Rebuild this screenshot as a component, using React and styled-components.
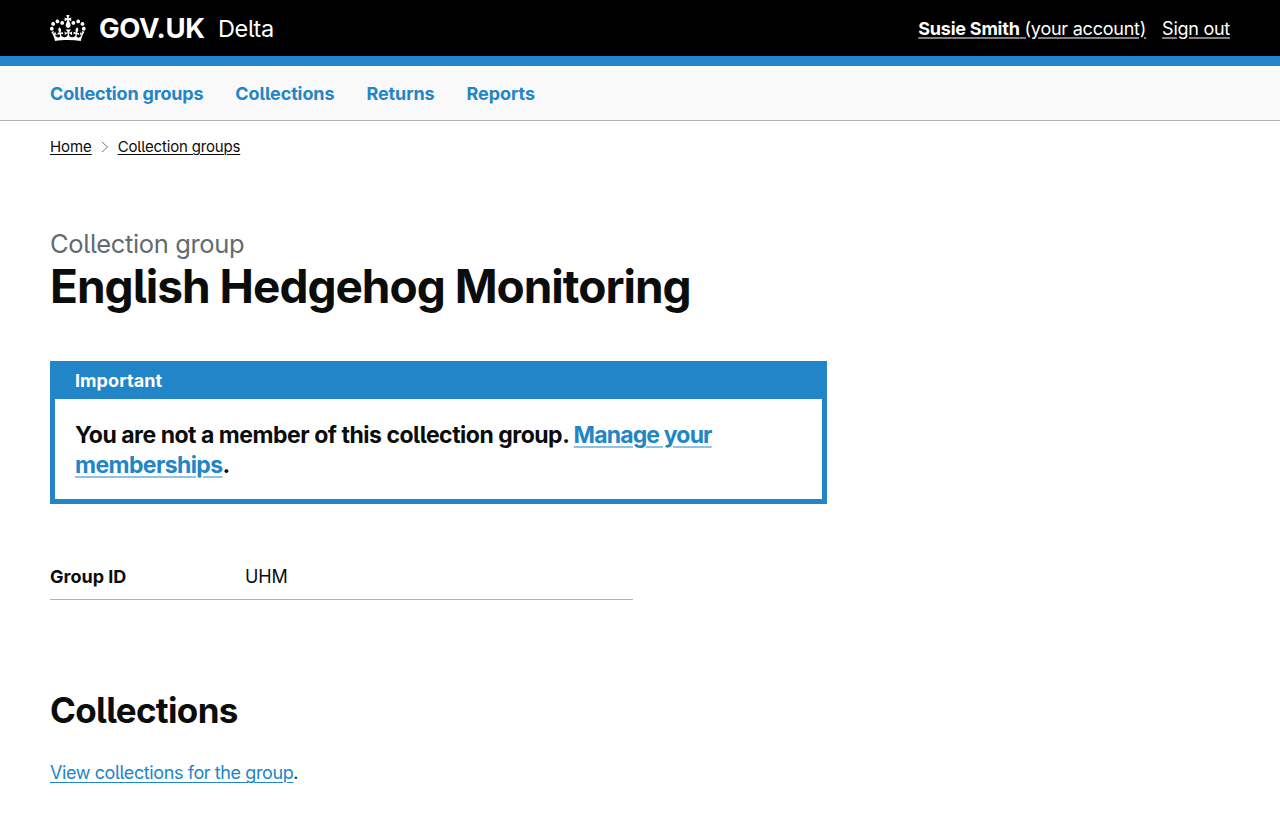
import React from "react";
import styled, { createGlobalStyle } from "styled-components";

const GlobalStyle = createGlobalStyle`
  * { box-sizing: border-box; }
  body {
    margin: 0;
    background: #fff;
    color: #0b0c0c;
    font-family: Inter, "Liberation Sans", sans-serif;
    font-size: 18px;
    font-weight: 400;
    line-height: 25px;
    font-feature-settings: "cv05" 1, "calt" 0;
    -webkit-font-smoothing: antialiased;
  }
  h1, h2, p, ul, ol, dl, dd, dt { margin: 0; padding: 0; }
  ul, ol { list-style: none; }
`;

const Text = styled.span`
  letter-spacing: ${(p) => p.$track || 0}px;
  white-space: nowrap;
`;

const Strong = styled(Text)`
  font-weight: 700;
`;

const Header = styled.header`
  display: flex;
  justify-content: space-between;
  height: 66px;
  padding: 0 50px;
  background: #000;
  border-bottom: 10px solid #2185c7;
  color: #fff;
`;

const Brand = styled.a`
  display: flex;
  align-items: center;
  height: 56px;
  color: #fff;
  text-decoration: none;
`;

const Crown = styled.svg`
  width: 36px;
  height: 32px;
  margin: 0 13px 2px 0;
  fill: currentColor;
`;

const LogoType = styled(Text)`
  width: 107px;
  padding-top: 1px;
  font-size: 27.5px;
  font-weight: 700;
`;

const Product = styled(Text)`
  margin-left: 12px;
  font-size: 23.5px;
`;

const Account = styled.nav`
  display: flex;
  align-items: center;
  gap: 16px;
  height: 56px;
`;

const AccountLink = styled.a`
  color: #fff;
  text-decoration: underline #808080 2px;
  text-underline-offset: 2px;
  white-space: nowrap;
`;

const MainNav = styled.nav`
  height: 55px;
  padding: 0 50px;
  background: #f9f9f9;
  border-bottom: 1px solid #b1b4b6;
`;

const NavList = styled.ul`
  display: flex;
  align-items: center;
  height: 54px;
`;

const NavItem = styled.li`
  width: ${(p) => p.$width}px;
  color: #2185c7;
  font-weight: 700;
`;

const Page = styled.div`
  padding: 16px 50px 0;
`;

const Crumbs = styled.ol`
  display: flex;
  align-items: center;
  height: 20px;
  font-size: 15px;
  line-height: 20px;
`;

const Crumb = styled.a`
  color: #0b0c0c;
  text-decoration: underline 1px;
  text-underline-offset: 2px;
`;

const Chevron = styled.svg`
  width: 8px;
  height: 12px;
  margin: 0 9px 1px;
  fill: none;
  stroke: #6f777b;
`;

const Caption = styled.span`
  display: block;
  margin-top: 72px;
  height: 30px;
  color: #626b70;
  font-size: 25.5px;
  line-height: 30px;
`;

const Title = styled.h1`
  margin-top: 2px;
  height: 50px;
  font-size: 46px;
  font-weight: 700;
  line-height: 50px;
`;

const Banner = styled.section`
  width: 776.67px;
  margin-top: 50px;
  border: 5px solid #2185c7;
  border-top: 0;
`;

const BannerHeader = styled.div`
  height: 38px;
  padding: 7px 20px 0;
  background: #2185c7;
  color: #fff;
  font-weight: 700;
`;

const BannerBody = styled.p`
  padding: 21px 20px 19px;
  font-size: 23px;
  font-weight: 700;
  line-height: 30px;
`;

const BannerLink = styled.a`
  color: #2185c7;
  text-decoration: underline rgba(33, 133, 199, 0.5) 2px;
  text-underline-offset: 3px;
`;

const Summary = styled.dl`
  display: flex;
  width: 582.5px;
  height: 46px;
  margin-top: 50px;
  padding-top: 10px;
  border-bottom: 1px solid #b1b4b6;
`;

const Term = styled.dt`
  width: 195px;
  font-weight: 700;
`;

const SectionTitle = styled.h2`
  margin-top: 90px;
  height: 40px;
  font-size: 35px;
  font-weight: 700;
  line-height: 40px;
`;

const Body = styled.p`
  margin-top: 30px;
`;

const BodyLink = styled.a`
  color: #2185c7;
  text-decoration: underline 1px;
  text-underline-offset: 3px;
`;

const crownPath =
  "M6.7 12.2c1 .4 2.1-.1 2.5-1s-.1-2.1-1-2.5c-1-.4-2.1.1-2.5 1-.4 1 0 2.1 1 2.5m-4.3 2.5c1 .4 2.1-.1 2.5-1s-.1-2.1-1-2.5c-1-.4-2.1.1-2.5 1-.5 1 0 2.1 1 2.5m-1.3 4.8c1 .4 2.1-.1 2.5-1 .4-1-.1-2.1-1-2.5-1-.4-2.1.1-2.5 1-.4 1 0 2.1 1 2.5m10.4-5.8c1 .4 2.1-.1 2.5-1s-.1-2.1-1-2.5c-1-.4-2.1.1-2.5 1s0 2.1 1 2.5m17.4-1.5c-1 .4-2.1-.1-2.5-1s.1-2.1 1-2.5c1-.4 2.1.1 2.5 1 .5 1 0 2.1-1 2.5m4.3 2.5c-1 .4-2.1-.1-2.5-1s.1-2.1 1-2.5c1-.4 2.1.1 2.5 1 .5 1 0 2.1-1 2.5m1.3 4.8c-1 .4-2.1-.1-2.5-1-.4-1 .1-2.1 1-2.5 1-.4 2.1.1 2.5 1 .4 1 0 2.1-1 2.5m-10.4-5.8c-1 .4-2.1-.1-2.5-1s.1-2.1 1-2.5c1-.4 2.1.1 2.5 1s0 2.1-1 2.5m-5.3-4.8 2.4 1.3V6.5l-2.4.8c-.1-.1-.1-.2-.2-.3s1-3 1-3h-3.4l1 3c-.1.1-.2.2-.2.3-.1.1-2.4-.8-2.4-.8v3.7l2.4-1.3c.1.1.2.3.3.4l-1.5 4.2c-.2.8-.1 1.6.3 2.2.4.6 1.1 1.1 1.8 1.2h.5c.8-.1 1.4-.6 1.8-1.2.4-.6.5-1.5.3-2.2L18.8 9c.1-.1.2-.2.2-.3m-1 20.3c4.6 0 8.9.3 12.8.9 1.1-4.6 2.4-7.2 3.8-9.1l-2.6-.9c.3 1.3.3 1.9 0 2.8-.4-.4-.8-1.2-1.1-2.4l-1.2 4.2c.8-.5 1.4-.9 2-.9-1.2 2.6-2.7 3.2-3.6 3-1.2-.2-1.7-1.3-1.5-2.2.3-1.3 1.6-1.6 2.2-.1 1.2-2.4-.8-3.1-2.1-2.4 1.9-1.9 2.2-3.6.6-5.7-2.2 1.7-2.2 3.3-1.2 5.6-1.3-1.5-3.3-.7-2.5 1.7.9-1.4 2.1-.5 2 .8-.2 1.2-1.7 2.1-3.7 1.9-2.8-.2-2.9-2.1-3-3.6.7-.1 1.9.5 2.9 1.9l.4-4.3c-1.1 1.1-2.1 1.4-3.2 1.4.4-1.2 2.1-3 2.1-3h-5.5s1.7 1.9 2.1 3c-1.1 0-2.1-.2-3.2-1.4l.4 4.3c1-1.4 2.2-2 2.9-1.9-.1 1.5-.2 3.4-3 3.6-1.9.2-3.5-.7-3.7-1.9-.2-1.3 1-2.2 1.9-.8.7-2.3-1.2-3-2.5-1.7 1-2.3 1-3.9-1.2-5.6-1.6 2-1.3 3.7.6 5.6-1.3-.7-3.2 0-2.1 2.4.6-1.5 1.9-1.1 2.2.1.2.9-.4 1.9-1.5 2.2-1 .2-2.5-.5-3.6-3 .7 0 1.3.4 2 .9L5 20.4c-.3 1.2-.7 1.9-1.2 2.4-.3-.8-.2-1.5 0-2.8l-2.6.9C2.7 22.8 4 25.4 5.1 30c3.9-.6 8.3-.9 12.9-.9";

const navItems = [
  { label: "Collection groups", width: 185.3, track: -0.17 },
  { label: "Collections", width: 131.2, track: -0.1 },
  { label: "Returns", width: 100, track: -0.12 },
  { label: "Reports", width: 100, track: -0.06 },
];

export default function App() {
  return (
    <>
      <GlobalStyle />
      <Header>
        <Brand>
          <Crown viewBox="0 0 36 32" aria-hidden="true">
            <path fillRule="evenodd" d={crownPath} />
          </Crown>
          <LogoType $track={-0.35}>GOV.UK</LogoType>
          <Product $track={-0.35}>Delta</Product>
        </Brand>
        <Account>
          <AccountLink>
            <Strong $track={-0.22}>Susie Smith</Strong>
            <Text $track={-0.23}> (your account)</Text>
          </AccountLink>
          <AccountLink>
            <Text $track={-0.26}>Sign out</Text>
          </AccountLink>
        </Account>
      </Header>
      <MainNav>
        <NavList>
          {navItems.map((item) => (
            <NavItem key={item.label} $width={item.width}>
              <Text $track={item.track}>{item.label}</Text>
            </NavItem>
          ))}
        </NavList>
      </MainNav>
      <Page>
        <Crumbs>
          <li>
            <Crumb><Text $track={-0.1}>Home</Text></Crumb>
          </li>
          <Chevron viewBox="0 0 8 12" aria-hidden="true">
            <path d="M1 1l5.5 5L1 11" />
          </Chevron>
          <li>
            <Crumb><Text $track={-0.17}>Collection groups</Text></Crumb>
          </li>
        </Crumbs>
        <main>
          <Caption><Text $track={-0.35}>Collection group</Text></Caption>
          <Title><Text $track={-1}>English Hedgehog Monitoring</Text></Title>
          <Banner>
            <BannerHeader><Text $track={0.07}>Important</Text></BannerHeader>
            <BannerBody>
              <Text $track={-0.48}>You are not a member of this collection group. </Text>
              <BannerLink>
                <Text $track={-0.85}>Manage your</Text>
                <br />
                <Text $track={-0.6}>memberships</Text>
              </BannerLink>
              .
            </BannerBody>
          </Banner>
          <Summary>
            <Term><Text $track={0}>Group ID</Text></Term>
            <dd><Text $track={-0.1}>UHM</Text></dd>
          </Summary>
          <SectionTitle><Text $track={-0.65}>Collections</Text></SectionTitle>
          <Body>
            <BodyLink><Text $track={-0.4}>View collections for the group</Text></BodyLink>.
          </Body>
        </main>
      </Page>
    </>
  );
}
